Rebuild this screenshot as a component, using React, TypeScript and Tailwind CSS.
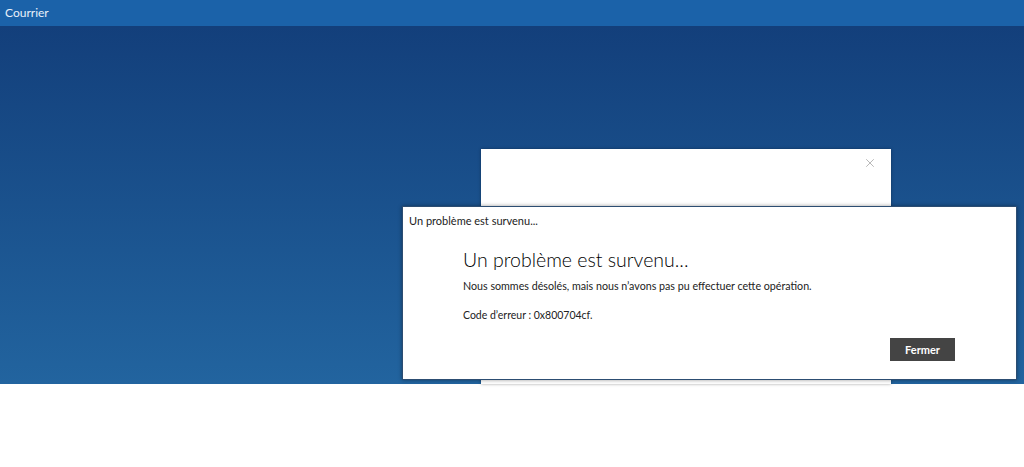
import { X } from "lucide-react";

export default function App() {
  return (
    <div className="w-[1024px] h-[467px] bg-white flex flex-col overflow-hidden" style={{ fontFamily: 'Lato, "Noto Sans", sans-serif' }}>
      {/* title bar */}
      <div className="h-[26px] shrink-0 bg-[#1b62a9] flex items-center px-[5px]">
        <span className="text-[12px] text-[#e8f0fa]">Courrier</span>
      </div>

      {/* app surface */}
      <div className="relative h-[358px] shrink-0 bg-gradient-to-b from-[#133f7b] to-[#22649f]">
        {/* panel behind */}
        <div className="absolute left-[481px] top-[123px] w-[410px] h-[235px] bg-white shadow-[0_0_3px_rgba(0,0,0,0.35)]">
          <X className="absolute right-[14px] top-[7px] text-[#9a9a9a]" size={14} strokeWidth={1.2} />
        </div>

        {/* error dialog */}
        <div className="absolute left-[402px] top-[180px] w-[615px] h-[174px] bg-white border border-[#2c4d72] shadow-[0_0_4px_rgba(0,0,0,0.4)] flex flex-col">
          <div className="pl-[6px] pt-[6px] text-[11px] text-[#222]">Un problème est survenu...</div>
          <div className="pl-[60px] pt-[16px] flex flex-col">
            <div className="text-[19.5px] font-light text-black leading-[28px]">Un problème est survenu...</div>
            <div className="mt-[4px] text-[10.7px] text-[#222]">Nous sommes désolés, mais nous n’avons pas pu effectuer cette opération.</div>
            <div className="mt-[14px] text-[10.5px] text-[#222]">Code d’erreur : 0x800704cf.</div>
          </div>
          <div className="flex justify-end pr-[61px] mt-[15px]">
            <button className="w-[65px] h-[23px] bg-[#444444] text-white text-[11px] font-bold">Fermer</button>
          </div>
        </div>
      </div>
    </div>
  );
}
